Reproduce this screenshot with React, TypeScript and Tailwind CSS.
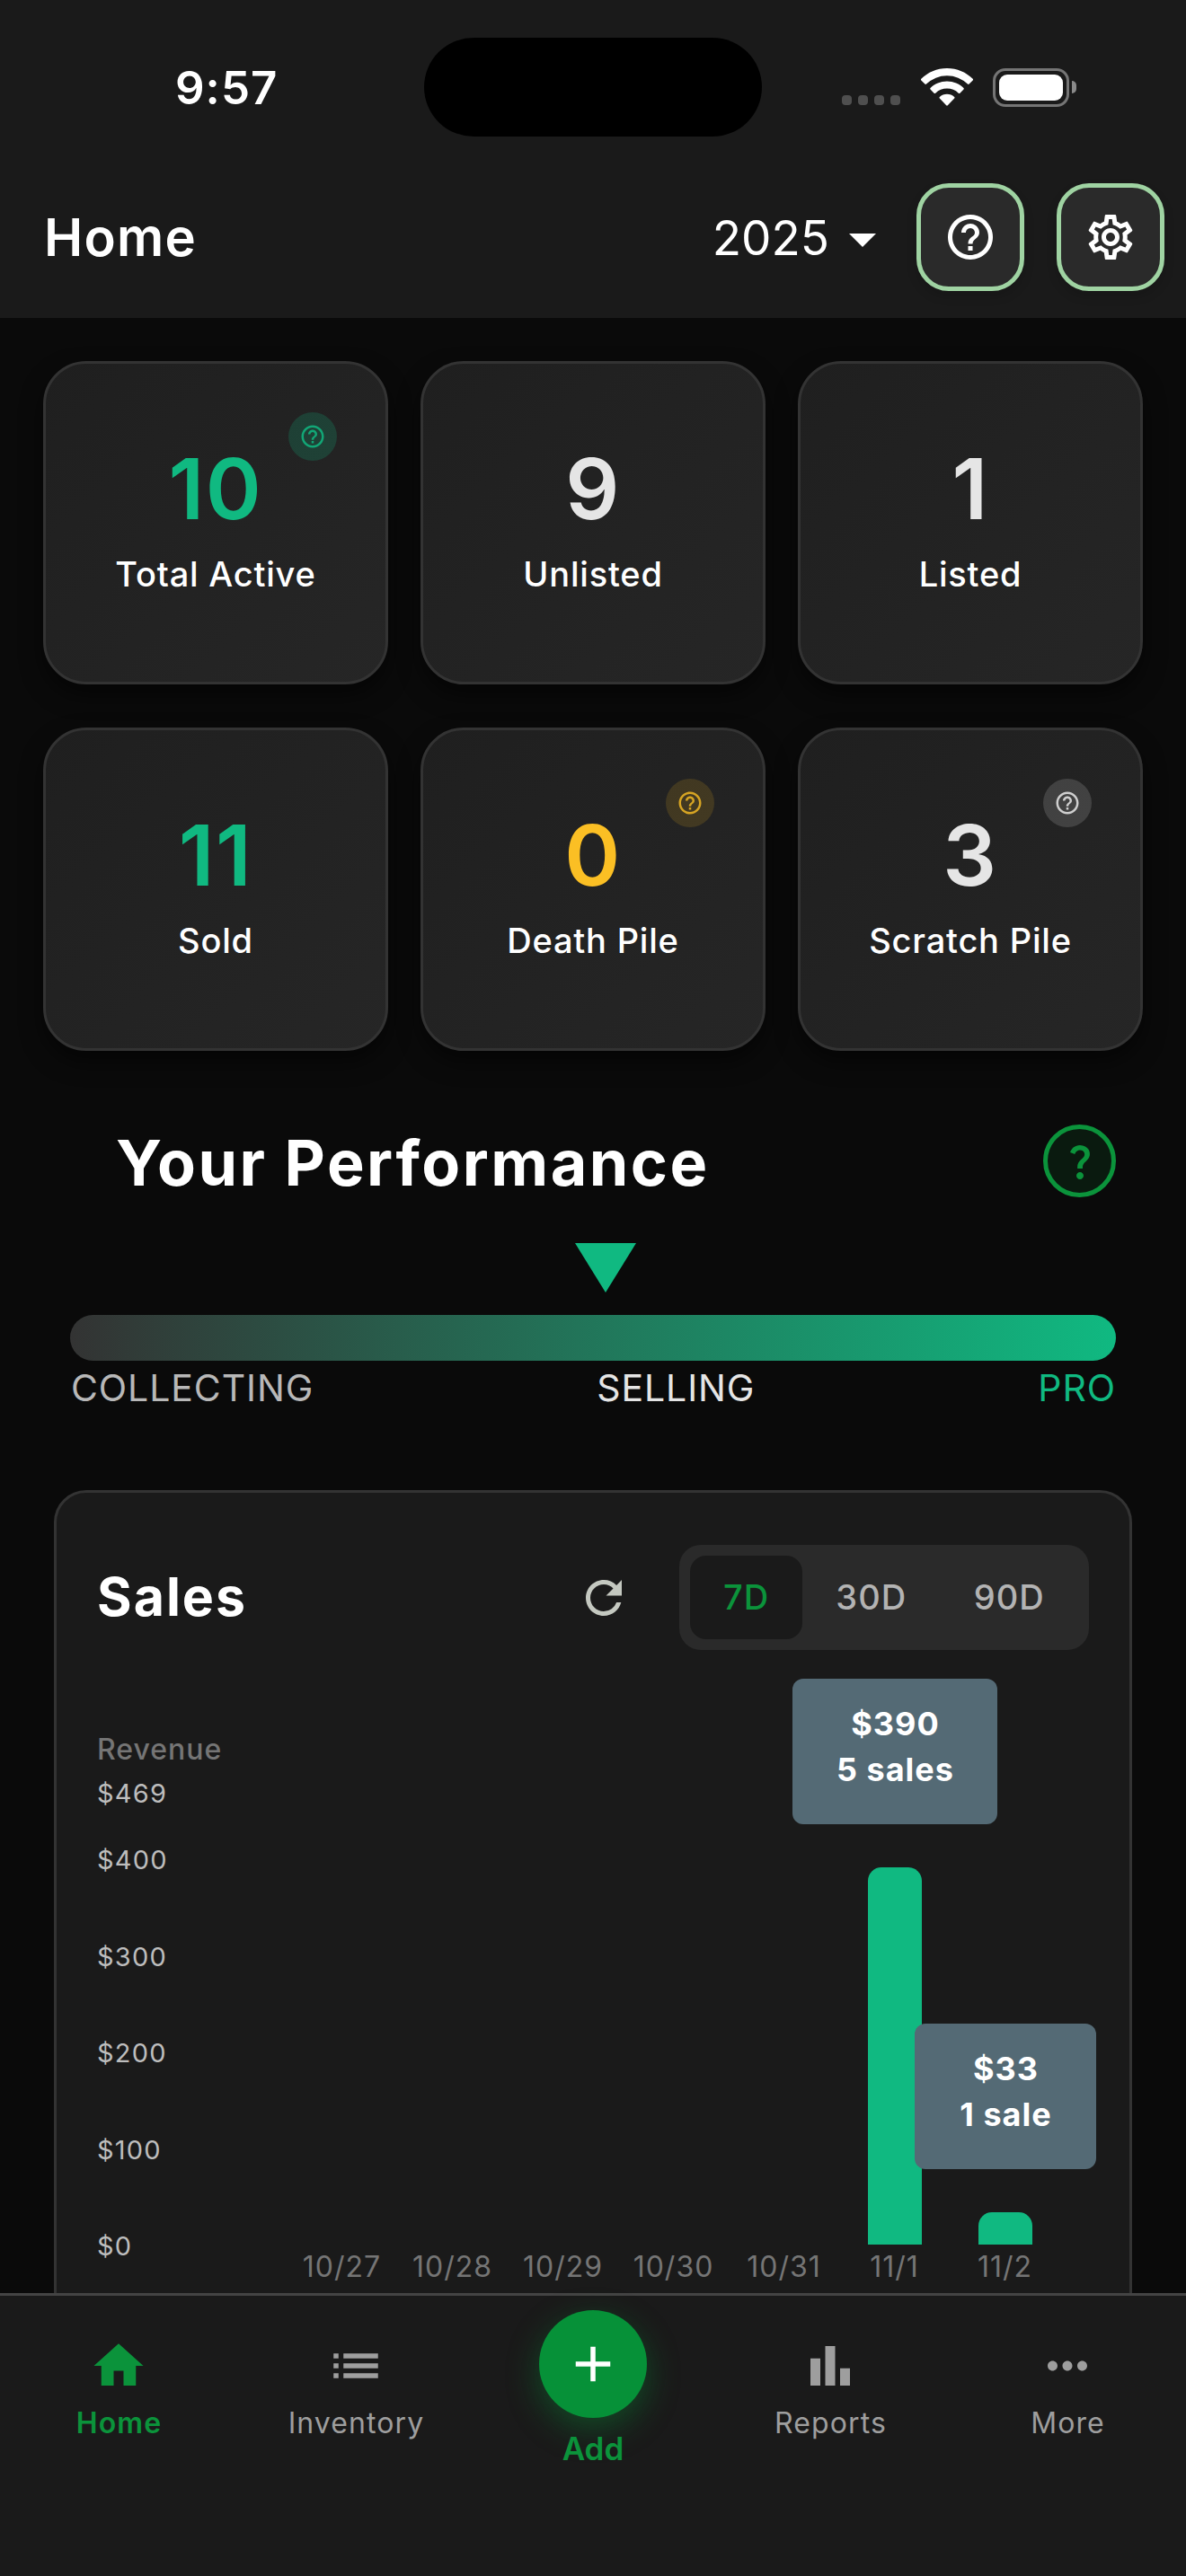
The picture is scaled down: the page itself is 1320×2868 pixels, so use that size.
import clsx from "clsx";
import type { IconType } from "react-icons";
import {
  MdAdd,
  MdArrowDropDown,
  MdBarChart,
  MdHelpOutline,
  MdHome,
  MdList,
  MdMoreHoriz,
  MdOutlineSettings,
  MdQuestionMark,
  MdRefresh,
} from "react-icons/md";

type Stat = {
  label: string;
  value: number;
  color: string;
  badge?: string;
};

const stats: Stat[] = [
  { label: "Total Active", value: 10, color: "text-[#10b981]", badge: "bg-[#10b981]/20 text-[#10b981]/85" },
  { label: "Unlisted", value: 9, color: "text-[#e5e5e5]" },
  { label: "Listed", value: 1, color: "text-[#e5e5e5]" },
  { label: "Sold", value: 11, color: "text-[#10b981]" },
  { label: "Death Pile", value: 0, color: "text-[#fbbf24]", badge: "bg-[#fbbf24]/15 text-[#fbbf24]/80" },
  { label: "Scratch Pile", value: 3, color: "text-[#e5e5e5]", badge: "bg-white/14 text-white/75" },
];

type Day = { date: string; revenue: number; sales: number };

const days: Day[] = [
  { date: "10/27", revenue: 0, sales: 0 },
  { date: "10/28", revenue: 0, sales: 0 },
  { date: "10/29", revenue: 0, sales: 0 },
  { date: "10/30", revenue: 0, sales: 0 },
  { date: "10/31", revenue: 0, sales: 0 },
  { date: "11/1", revenue: 390, sales: 5 },
  { date: "11/2", revenue: 33, sales: 1 },
];

const MAX_REVENUE = 469;
const PLOT_HEIGHT = 504;
const ticks = [400, 300, 200, 100, 0];

function StatusBar() {
  return (
    <div className="flex h-[174px] items-start pt-[42px]">
      <div className="flex h-[112px] w-[472px] items-center pl-[195px] text-[51px] font-semibold tracking-[1px]">
        9:57
      </div>
      <div className="h-[110px] w-[376px] rounded-full bg-black" />
      <div className="flex h-[110px] items-center pl-[89px]">
        <div className="mt-[29px] flex gap-[7px]">
          {[0, 1, 2, 3].map((i) => (
            <span key={i} className="size-[11px] rounded-[4px] bg-[#4f4f4f]" />
          ))}
        </div>
        <svg className="ml-[23px] h-[42px] w-[58px]" viewBox="0 0 58 42" fill="#fff">
          <path d="M29 0C40.2 0 50.4 4.5 57.7 11.8Q58.4 12.6 57.7 13.4L53.6 17.6Q52.8 18.4 52 17.6A33 33 0 0 0 6 17.6Q5.2 18.4 4.4 17.6L.3 13.4Q-.4 12.6 .3 11.8C7.6 4.5 17.8 0 29 0Z" />
          <path d="M29 14.5C36.2 14.5 42.7 17.3 47.5 22Q48.2 22.8 47.5 23.5L43.4 27.7Q42.6 28.4 41.8 27.7A18.6 18.6 0 0 0 16.2 27.7Q15.4 28.4 14.6 27.7L10.5 23.5Q9.8 22.8 10.5 22C15.3 17.3 21.8 14.5 29 14.5Z" />
          <path d="M29 28.7C32.1 28.7 35 29.9 37.2 31.9Q38 32.7 37.2 33.4L29.8 41.3Q29 42.1 28.2 41.3L20.8 33.4Q20 32.7 20.8 31.9C23 29.9 25.9 28.7 29 28.7Z" />
        </svg>
        <div className="ml-[22px] flex h-[43px] w-[85px] items-center justify-center rounded-[14px] border-[3px] border-[#757575]">
          <div className="h-[29px] w-[71px] rounded-[9px] bg-white" />
        </div>
        <div className="ml-[3px] h-[14px] w-[5px] rounded-r-full bg-[#8a8a8a]" />
      </div>
    </div>
  );
}

function HeaderButton({ icon: Icon }: { icon: IconType }) {
  return (
    <button className="flex size-[120px] items-center justify-center rounded-[36px] border-[5px] border-[#9fd3a2] bg-[#2a2a2a] shadow-[0_6px_12px_rgba(0,0,0,0.15)]">
      <Icon className="size-[60px]" />
    </button>
  );
}

function Header() {
  return (
    <header className="bg-[#1a1a1a]">
      <StatusBar />
      <div className="flex h-[180px] items-center pr-6 pl-[49px]">
        <h1 className="text-[58px] font-semibold tracking-[1.2px]">Home</h1>
        <div className="ml-auto mt-[3px] flex items-center">
          <span className="text-[53px]">2025</span>
          <MdArrowDropDown className="ml-px size-[72px]" />
        </div>
        <div className="ml-6 flex gap-9">
          <HeaderButton icon={MdHelpOutline} />
          <HeaderButton icon={MdOutlineSettings} />
        </div>
      </div>
    </header>
  );
}

function StatCard({ label, value, color, badge }: Stat) {
  return (
    <div className="relative flex h-[360px] flex-col items-center rounded-[48px] border-[3px] border-[#333] bg-linear-to-br from-[#1f1f1f] to-[#262626] pt-[89px] shadow-[0_12px_24px_rgba(0,0,0,0.5)]">
      <div className={clsx("text-[94px] leading-[100px] font-semibold tracking-[1.5px]", color)}>{value}</div>
      <div className="mt-[20px] text-[38px] leading-[51px] font-medium tracking-[0.8px]">{label}</div>
      {badge ? (
        <span
          className={clsx(
            "absolute top-[54px] right-[54px] flex size-[54px] items-center justify-center rounded-full",
            badge
          )}
        >
          <MdHelpOutline className="size-[30px]" />
        </span>
      ) : null}
    </div>
  );
}

function Performance() {
  return (
    <section className="mt-[82px] px-[78px]">
      <div className="flex h-[81px] items-center justify-between pl-[51px]">
        <h2 className="mt-[3px] text-[70px] leading-[81px] font-bold tracking-[2.5px]">Your Performance</h2>
        <button className="flex size-[81px] items-center justify-center rounded-full border-[5px] border-[#0b933b] bg-[#0a1a0f] text-[#0b933b]">
          <MdQuestionMark className="size-12" />
        </button>
      </div>
      <svg className="mt-[51px] ml-[562px] h-[55px] w-[68px]" viewBox="0 0 68 55">
        <path d="M0 0H68L34 55Z" fill="#10b981" />
      </svg>
      <div className="mt-[25px] h-[51px] rounded-full bg-linear-to-r/srgb from-[#333] to-[#10b981]" />
      <div className="mt-[5px] flex justify-between pl-px text-[41px] leading-[50px] tracking-[0.9px]">
        <span className="text-[#b8b8b8]">COLLECTING</span>
        <span className="text-[#e5e5e5]">SELLING</span>
        <span className="text-[#10b981]">PRO</span>
      </div>
    </section>
  );
}

function DayColumn({ date, revenue, sales }: Day) {
  return (
    <div className="flex w-[123px] flex-col items-center">
      <div className="flex h-[662px] flex-col items-center justify-end">
        {sales > 0 ? (
          <div
            className="relative w-[60px] rounded-t-[15px] bg-[#10b981]"
            style={{ height: Math.ceil((revenue / MAX_REVENUE) * PLOT_HEIGHT) }}
          >
            <div
              className={clsx(
                "absolute bottom-full left-1/2 mb-12 h-[162px] -translate-x-1/2 rounded-xl bg-[#546a75] pt-[25px] pl-[2px] text-center text-[36px] leading-[51px] font-bold tracking-[1px]",
                sales > 1 ? "w-[228px]" : "w-[202px]"
              )}
            >
              <div>${revenue}</div>
              <div>
                {sales} {sales > 1 ? "sales" : "sale"}
              </div>
            </div>
          </div>
        ) : null}
      </div>
      <div className="mt-1 text-[32px] leading-[42px] tracking-[1px] text-[#757575]">{date}</div>
    </div>
  );
}

function SalesChart() {
  return (
    <div className="flex">
      <div className="w-[211px] pt-[90px] text-[29px] leading-[42px] tracking-[1.2px] text-[#bdbdbd]">
        <div className="mb-[7px] text-[32px] font-medium tracking-[1px] text-[#757575]">Revenue</div>
        <div className="mb-8">${MAX_REVENUE}</div>
        <div className="flex h-[472px] flex-col justify-between">
          {ticks.map((t) => (
            <div key={t}>${t}</div>
          ))}
        </div>
      </div>
      <div className="flex">
        {days.map((d) => (
          <DayColumn key={d.date} {...d} />
        ))}
      </div>
    </div>
  );
}

function Sales() {
  return (
    <section className="mx-[60px] mt-[89px] h-[1100px] rounded-[36px] border-[3px] border-[#333] bg-[#1a1a1a] px-[45px] pt-[58px]">
      <div className="flex h-[117px] items-center">
        <h2 className="text-[59px] font-bold tracking-[2px]">Sales</h2>
        <MdRefresh className="mr-[54px] ml-auto size-[60px] text-[#c4c8c0]" />
        <div className="flex h-[117px] w-[456px] rounded-3xl bg-[#2a2a2a] p-3 text-[38px] leading-[93px] font-medium tracking-[1px] text-[#b3b3b3]">
          <button className="w-[125px] rounded-[18px] bg-[#1a1a1a] text-[#0b933b]">7D</button>
          <button className="flex-1">30D</button>
          <button className="flex-1">90D</button>
        </div>
      </div>
      <SalesChart />
    </section>
  );
}

function NavItem({ icon: Icon, label, active }: { icon: IconType; label: string; active?: boolean }) {
  return (
    <button
      className={clsx(
        "flex flex-1 flex-col items-center pt-[45px] text-[32px] tracking-[1.1px]",
        active ? "font-semibold text-[#0b933b]" : "text-[#9e9e9e]"
      )}
    >
      <Icon className="size-[66px]" />
      <span className="mt-[10px] pl-px leading-[42px]">{label}</span>
    </button>
  );
}

function BottomNav() {
  return (
    <nav className="flex h-[315px] border-t-[3px] border-[#444] bg-[#1a1a1a]">
      <NavItem icon={MdHome} label="Home" active />
      <NavItem icon={MdList} label="Inventory" />
      <button className="flex flex-1 flex-col items-center pt-4">
        <span className="flex size-[120px] items-center justify-center rounded-full bg-[#069138] shadow-[0_12px_36px_rgba(6,145,56,0.4)]">
          <MdAdd className="size-[66px]" />
        </span>
        <span className="mt-3 text-[35px] leading-[44px] font-semibold text-[#0b933b]">Add</span>
      </button>
      <NavItem icon={MdBarChart} label="Reports" />
      <NavItem icon={MdMoreHoriz} label="More" />
    </nav>
  );
}

export default function App() {
  return (
    <div className="flex h-[2868px] w-[1320px] flex-col overflow-hidden bg-[#0a0a0a] font-['Inter',sans-serif] text-white">
      <Header />
      <main className="min-h-0 flex-1 overflow-hidden pt-12">
        <div className="grid grid-cols-3 gap-x-9 gap-y-12 px-12">
          {stats.map((s) => (
            <StatCard key={s.label} {...s} />
          ))}
        </div>
        <Performance />
        <Sales />
      </main>
      <BottomNav />
    </div>
  );
}
